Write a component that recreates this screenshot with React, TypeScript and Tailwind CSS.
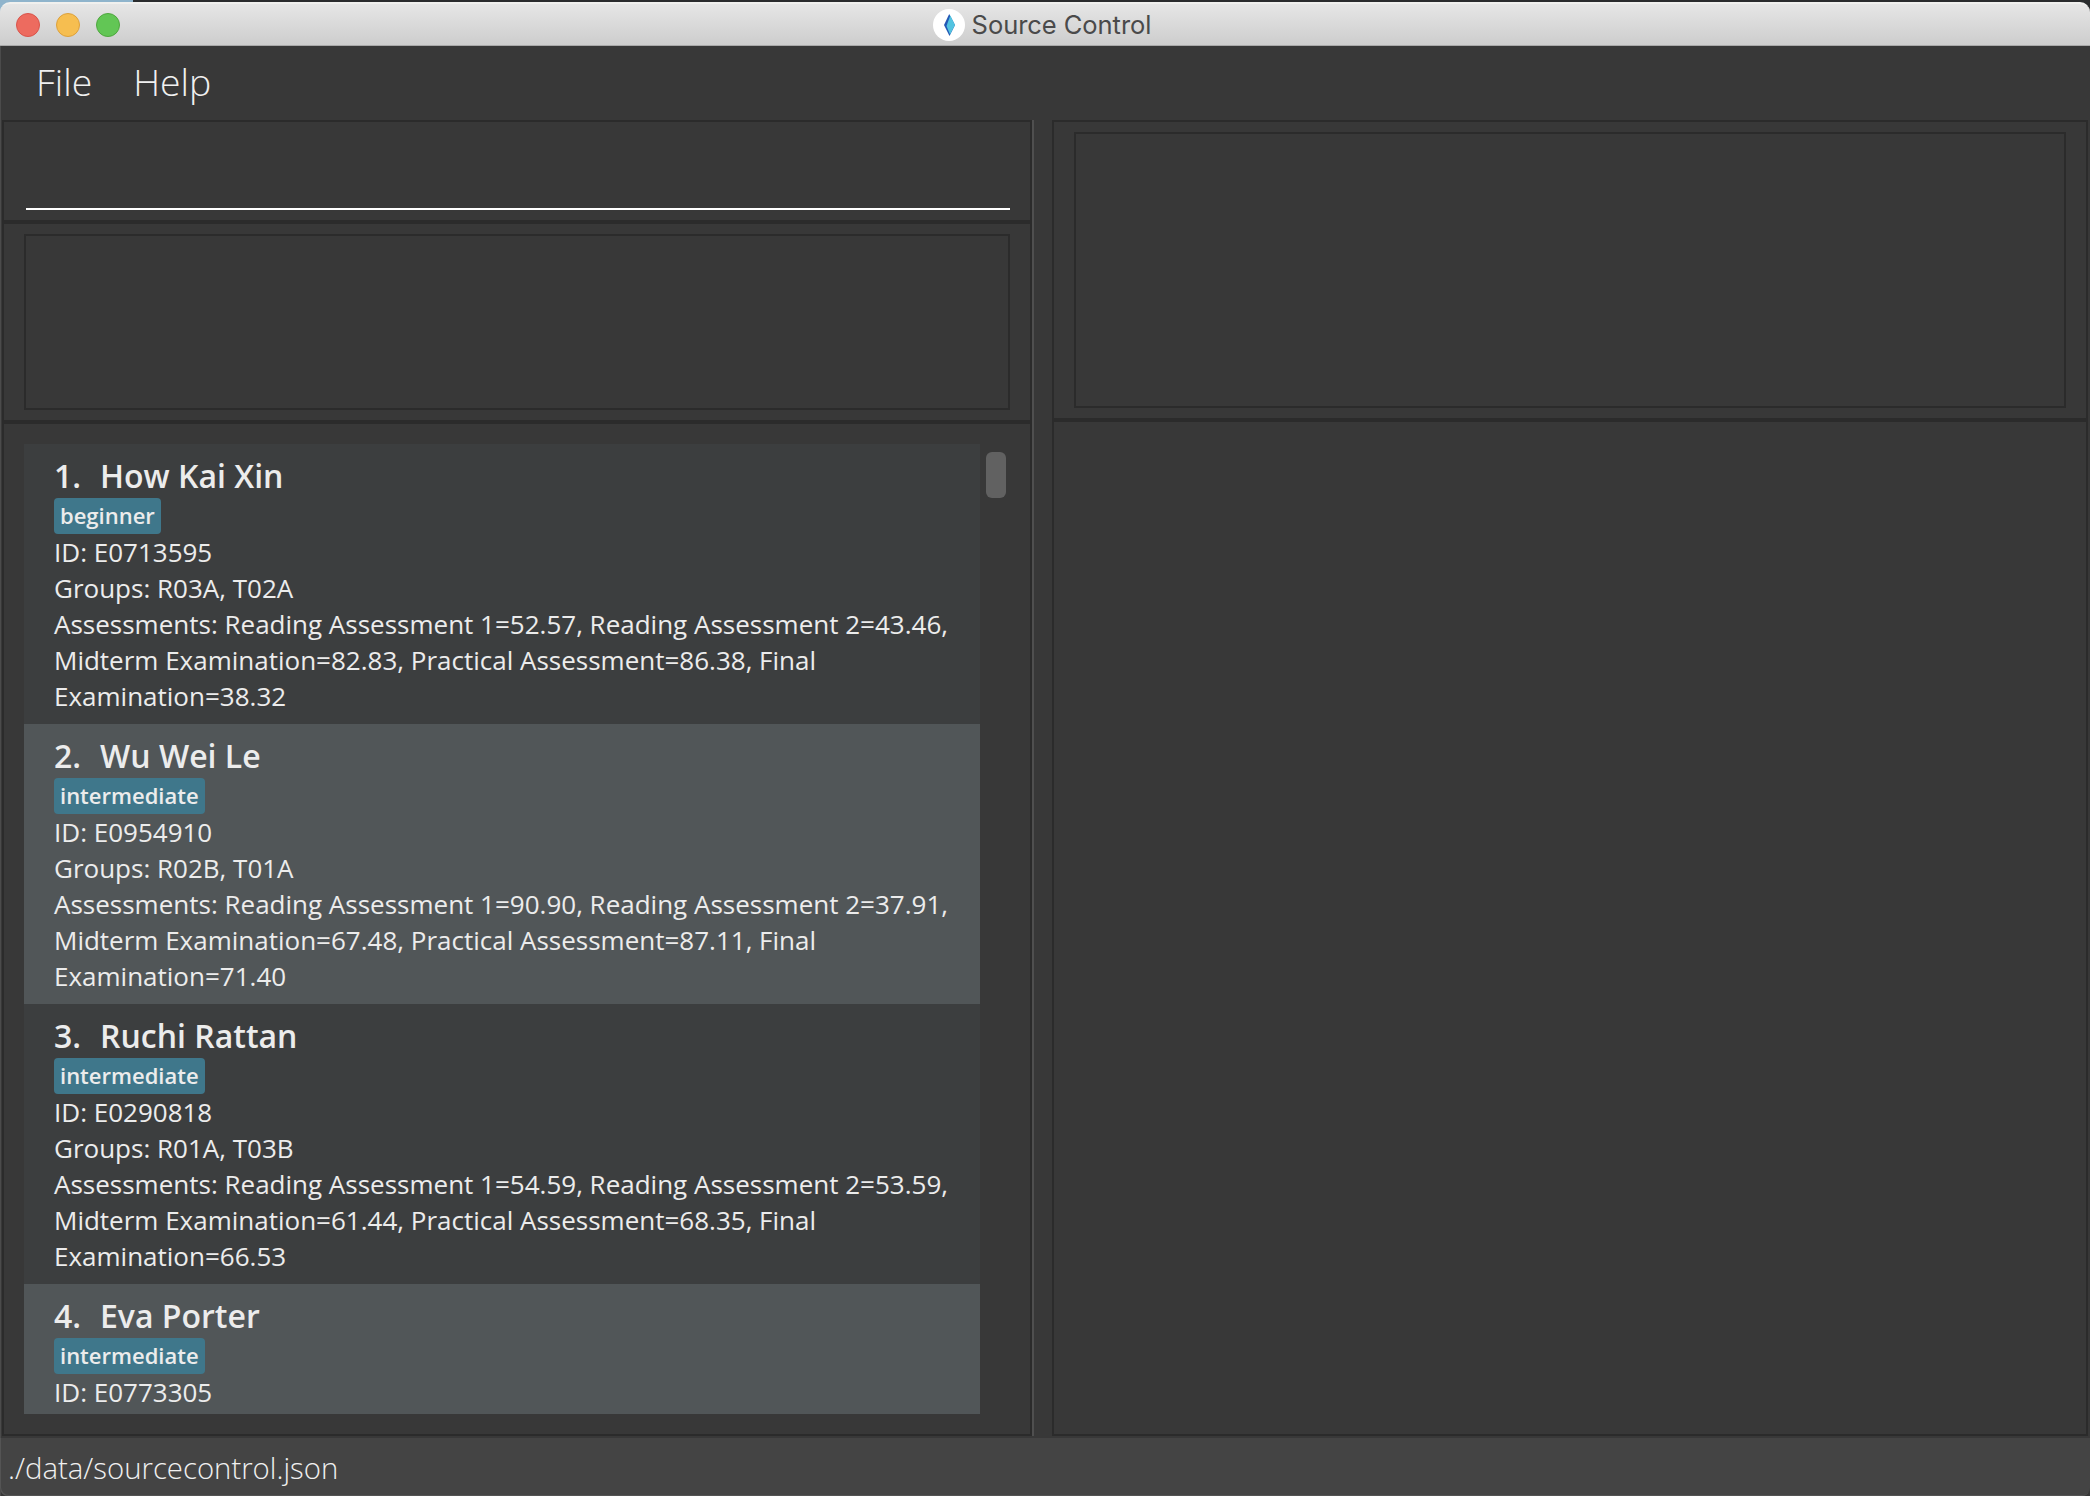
type Student = {
  name: string;
  tag: string;
  id: string;
  groups?: string;
  assessments?: string[];
};

const students: Student[] = [
  {
    name: 'How Kai Xin',
    tag: 'beginner',
    id: 'E0713595',
    groups: 'R03A, T02A',
    assessments: [
      'Reading Assessment 1=52.57, Reading Assessment 2=43.46,',
      'Midterm Examination=82.83, Practical Assessment=86.38, Final',
      'Examination=38.32',
    ],
  },
  {
    name: 'Wu Wei Le',
    tag: 'intermediate',
    id: 'E0954910',
    groups: 'R02B, T01A',
    assessments: [
      'Reading Assessment 1=90.90, Reading Assessment 2=37.91,',
      'Midterm Examination=67.48, Practical Assessment=87.11, Final',
      'Examination=71.40',
    ],
  },
  {
    name: 'Ruchi Rattan',
    tag: 'intermediate',
    id: 'E0290818',
    groups: 'R01A, T03B',
    assessments: [
      'Reading Assessment 1=54.59, Reading Assessment 2=53.59,',
      'Midterm Examination=61.44, Practical Assessment=68.35, Final',
      'Examination=66.53',
    ],
  },
  {
    name: 'Eva Porter',
    tag: 'intermediate',
    id: 'E0773305',
  },
];

function TitleBar() {
  return (
    <div className="h-[46px] shrink-0 bg-[linear-gradient(to_right,#8fb4cc_0_133px,#2a2c2e_133px)] pt-[2px]">
      <header className="grid h-[44px] grid-cols-[1fr_auto_1fr] items-center rounded-t-[10px] border-t-2 border-b border-t-[#f0f0ee] border-b-[#a9a9a9] bg-linear-to-b from-[#e6e6e6] to-[#cdcdcd] px-4">
        <div className="flex gap-4">
          <span className="size-6 rounded-full border border-[#d9544b] bg-[#ed6b5f]" />
          <span className="size-6 rounded-full border border-[#dda13c] bg-[#f6be50]" />
          <span className="size-6 rounded-full border border-[#4fa73f] bg-[#62c655]" />
        </div>
        <div className="mr-[6px] flex items-center">
          <svg className="size-8" viewBox="0 0 32 32">
            <circle cx="16" cy="16" r="16" fill="#fff" />
            <path d="M16.2 5 L22 16 L16.5 27 L11 16 Z" fill="#2357b5" />
            <path d="M17.3 6.5 L22 16 L17 25.5 L13.5 17 Z" fill="#52c3e0" />
          </svg>
          <h1 className="ml-[7px] font-[Inter] text-[25.5px] leading-8 tracking-[-0.05px] whitespace-nowrap text-[#4a4a4a]">
            Source Control
          </h1>
        </div>
      </header>
    </div>
  );
}

function StudentCard({ index, student }: { index: number; student: Student }) {
  return (
    <li className="h-[280px] shrink-0 px-[30px] pt-[10px] text-[26px] leading-[36px] whitespace-nowrap text-[#ececec] odd:bg-[#3c3e3f] even:bg-[#515658]">
      <h2 className="flex h-[44px] text-[32px] leading-[43px] font-semibold">
        <span className="w-[46px]">{index}.</span>
        {student.name}
      </h2>
      <span className="block h-[36px] w-fit rounded-[4px] bg-[#3f778b] px-[6px] text-[22px] leading-[34px] font-semibold">
        {student.tag}
      </span>
      <p>ID: {student.id}</p>
      {student.groups && <p>Groups: {student.groups}</p>}
      {student.assessments && (
        <div>
          Assessments:{' '}
          {student.assessments.map((line) => (
            <span key={line}>
              {line}
              <br />
            </span>
          ))}
        </div>
      )}
    </li>
  );
}

export default function App() {
  return (
    <div className="flex h-[1496px] w-[2090px] flex-col overflow-hidden bg-[#383838] font-['Open_Sans',sans-serif]">
      <TitleBar />
      <div className="flex h-[1450px] flex-col shadow-[inset_1px_0_0_#4b4b4b]">
        <nav className="flex h-[74px] shrink-0 gap-[41px] pl-9 text-[37.33px] leading-[71px] font-light text-[#f0f0f0]">
          <span>File</span>
          <span>Help</span>
        </nav>
        <main className="flex h-[1316px] shrink-0 px-[2px]">
          <section className="flex w-[1030px] flex-col">
            <div className="h-[102px] border-2 border-[#2b2b2b] pt-[24px] pr-[20px] pl-[22px]">
              <div className="h-[64px] border-b-2 border-white" />
            </div>
            <div className="h-[200px] border-2 border-[#2b2b2b] px-[20px] py-[10px]">
              <div className="h-full border-2 border-[#2b2b2b]" />
            </div>
            <div className="flex h-[1014px] gap-[6px] border-2 border-[#2b2b2b] py-[20px] pl-[20px]">
              <ul className="flex h-[970px] w-[956px] flex-col overflow-hidden">
                {students.map((student, i) => (
                  <StudentCard key={student.id} index={i + 1} student={student} />
                ))}
              </ul>
              <div className="mt-[8px] h-[46px] w-[20px] rounded-[6px] bg-[#616161]" />
            </div>
          </section>
          <div className="mr-[18px] w-[2px] bg-[#4f4f4f]" />
          <section className="flex w-[1036px] flex-col">
            <div className="h-[300px] border-2 border-[#2b2b2b] px-[20px] py-[10px]">
              <div className="h-full border-2 border-[#2b2b2b]" />
            </div>
            <div className="h-[1016px] border-2 border-[#2b2b2b]" />
          </section>
        </main>
        <footer className="mt-[2px] h-[58px] rounded-b-[8px] bg-[#444444] pl-[8px] text-[29.33px] leading-[60px] font-light text-[#f0f0f0] shadow-[inset_1px_-1px_0_#545454]">
          ./data/sourcecontrol.json
        </footer>
      </div>
    </div>
  );
}
